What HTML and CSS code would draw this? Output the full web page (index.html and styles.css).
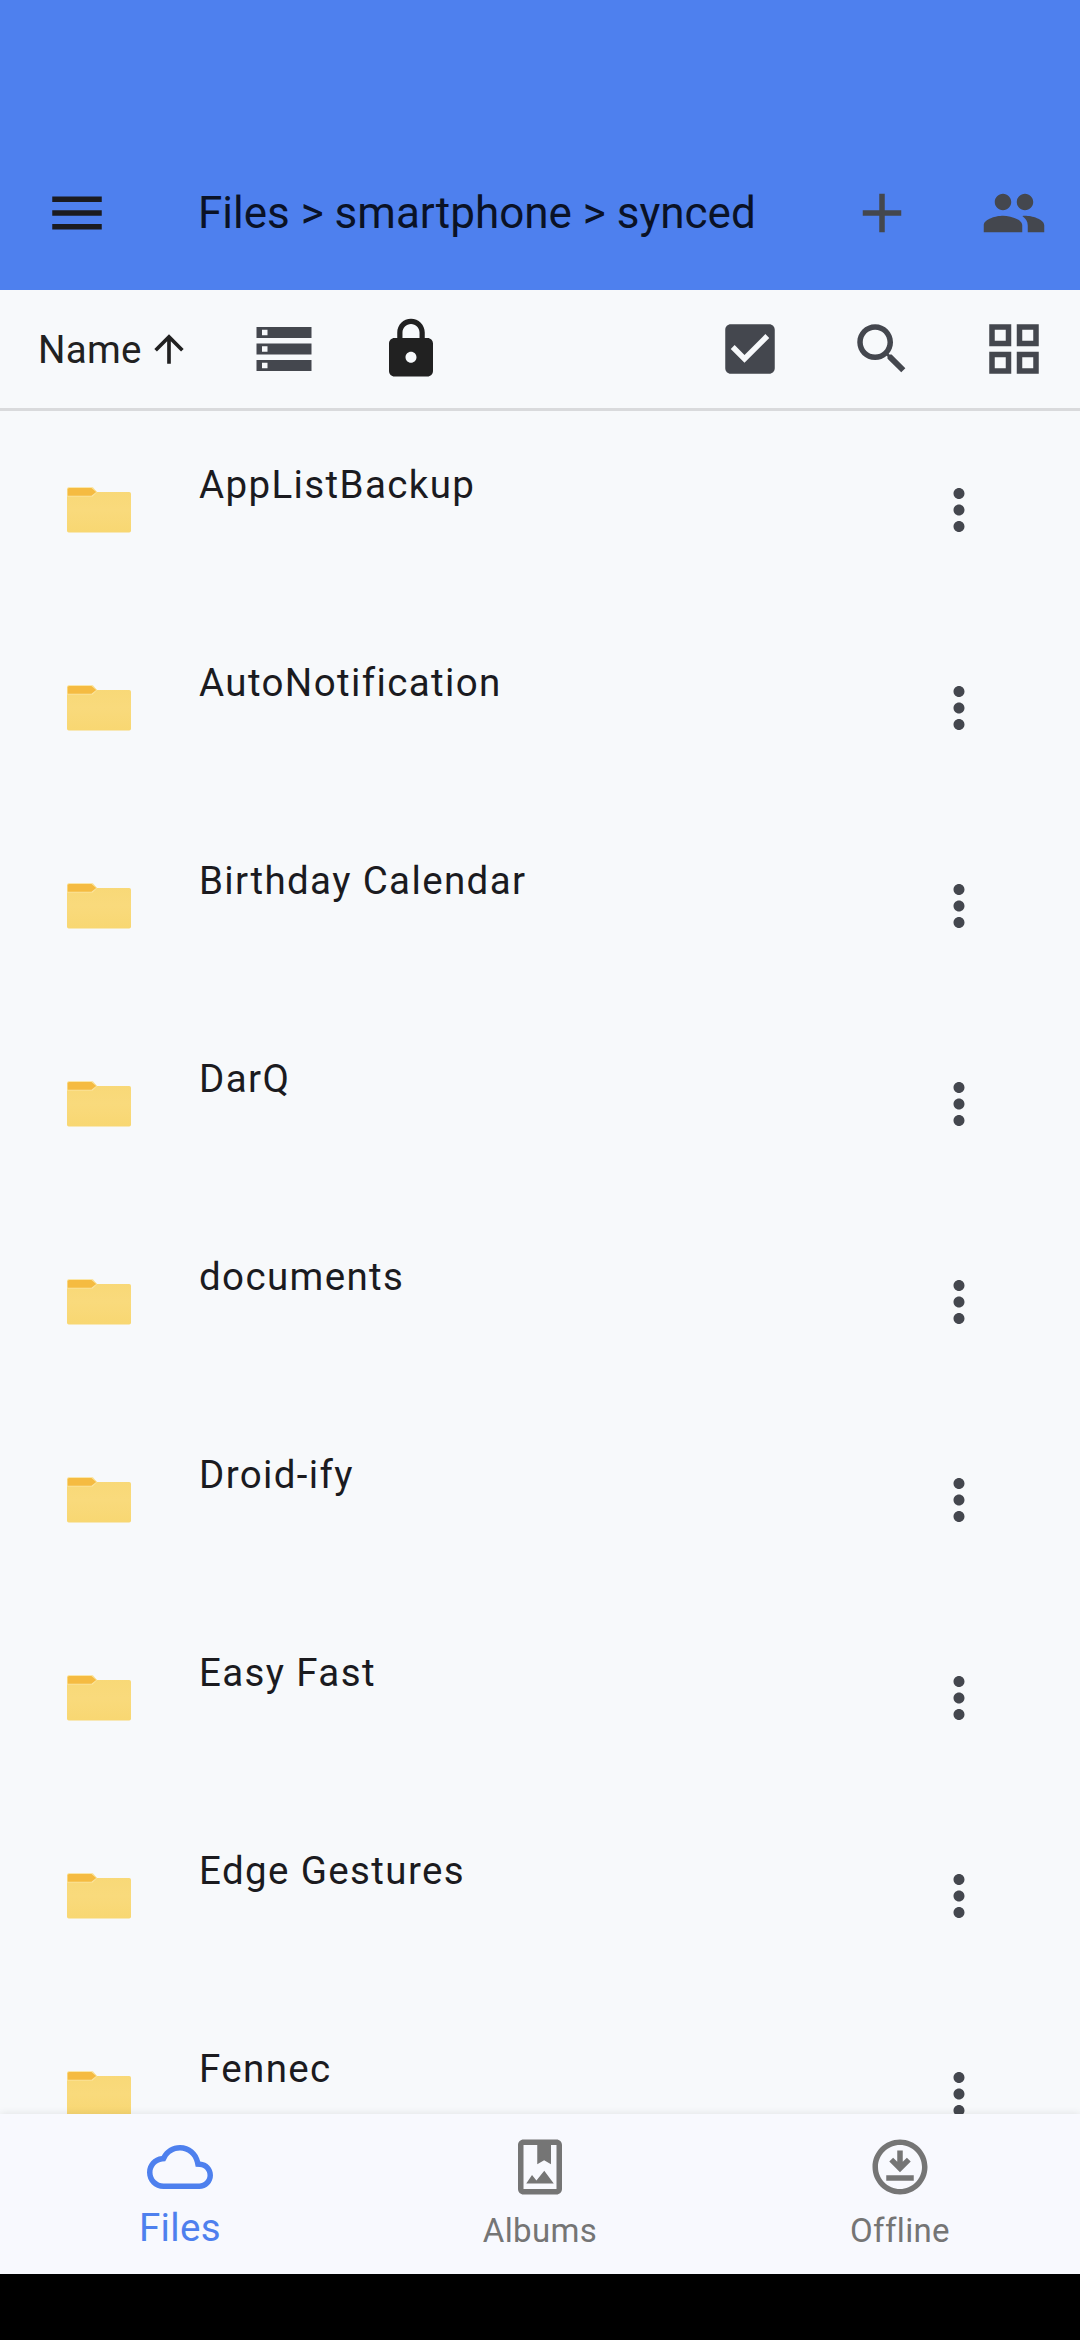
FILE: index.html
```html
<!DOCTYPE html>
<html lang="en">
<head>
<meta charset="utf-8">
<title>Files</title>
<link rel="stylesheet" href="styles.css">
</head>
<body>
<svg class="defs" aria-hidden="true">
  <defs>
    <linearGradient id="paper" x1="0" y1="0" x2="0" y2="1"><stop offset="0" stop-color="#f8d876"/><stop offset=".5" stop-color="#f9da7c"/><stop offset="1" stop-color="#f8d772"/></linearGradient>
  </defs>
  <symbol id="folder" viewBox="0 0 64 46">
    <path fill="url(#paper)" d="M0 2.2Q0 .4 1.8 .4H26L30 5H62.200Q64 5 64 6.800V43.700Q64 45.500 62.200 45.500H1.800Q0 45.500 0 43.700Z"/>
    <path fill="#fbe6a4" d="M0 2.200Q0 .2 2 .2H25.500L30 5L25.500 9.600H0Z"/>
    <path fill="#f5bb41" d="M.6 2.600Q.6 1 2.200 1H24.500L29.200 5L24.500 8.700H.6Z"/>
  </symbol>
  <symbol id="more" viewBox="0 0 24 24"><path d="M12 8c1.100 0 2-.9 2-2s-.9-2-2-2-2 .9-2 2 .9 2 2 2zm0 2c-1.100 0-2 .9-2 2s.9 2 2 2 2-.9 2-2-.9-2-2-2zm0 6c-1.100 0-2 .9-2 2s.9 2 2 2 2-.9 2-2-.9-2-2-2z"/></symbol>
</svg>
<div class="screen">
  <header class="appbar">
    <svg class="icon menu" viewBox="0 0 24 24"><path d="M3 18h18v-2H3v2zm0-5h18v-2H3v2zm0-7v2h18V6H3z"/></svg>
    <h1 class="title">Files &gt; smartphone &gt; synced</h1>
    <svg class="icon" viewBox="0 0 24 24"><path d="M19 13h-6v6h-2v-6H5v-2h6V5h2v6h6v2z"/></svg>
    <svg class="icon" viewBox="0 0 24 24"><path d="M16 11c1.660 0 2.990-1.340 2.990-3S17.660 5 16 5c-1.660 0-3 1.340-3 3s1.340 3 3 3zm-8 0c1.660 0 2.990-1.340 2.990-3S9.660 5 8 5C6.340 5 5 6.340 5 8s1.340 3 3 3zm0 2c-2.330 0-7 1.170-7 3.500V19h14v-2.500c0-2.330-4.670-3.500-7-3.500zm8 0c-.29 0-.62.020-.97.050 1.160.84 1.970 1.970 1.970 3.450V19h6v-2.500c0-2.330-4.670-3.500-7-3.500z"/></svg>
  </header>
  <div class="toolbar">
    <div class="sort"><span>Name</span><svg class="arrow" viewBox="0 0 24 24"><path d="M4 12l1.410 1.410L11 7.830V20h2V7.830l5.580 5.590L20 12l-8-8-8 8z"/></svg></div>
    <svg class="icon storage" viewBox="0 0 24 24"><path d="M2 20h20v-4H2v4zm2-3h2v2H4v-2zM2 4v4h20V4H2zm4 3H4V5h2v2zm-4 7h20v-4H2v4zm2-3h2v2H4v-2z"/></svg>
    <svg class="icon lock" viewBox="0 0 24 24"><path d="M18 8h-1V6c0-2.760-2.240-5-5-5S7 3.240 7 6v2H6c-1.100 0-2 .9-2 2v10c0 1.100.9 2 2 2h12c1.100 0 2-.9 2-2V10c0-1.100-.9-2-2-2zm-6 9c-1.100 0-2-.9-2-2s.9-2 2-2 2 .9 2 2-.9 2-2 2zm3.100-9H8.900V6c0-1.710 1.390-3.100 3.100-3.100 1.710 0 3.100 1.390 3.100 3.100v2z"/></svg>
    <div class="actions">
      <svg class="icon" viewBox="0 0 24 24"><path d="M19 3H5c-1.110 0-2 .9-2 2v14c0 1.100.89 2 2 2h14c1.110 0 2-.9 2-2V5c0-1.100-.89-2-2-2zm-9 14l-5-5 1.410-1.410L10 14.170l7.590-7.590L19 8l-9 9z"/></svg>
      <svg class="icon" viewBox="0 0 24 24"><path d="M15.500 14h-.79l-.28-.27C15.410 12.590 16 11.110 16 9.500 16 5.910 13.090 3 9.500 3S3 5.910 3 9.500 5.910 16 9.500 16c1.610 0 3.090-.59 4.230-1.570l.27.28v.79l5 4.990L20.490 19l-4.990-5zm-6 0C7.010 14 5 11.990 5 9.500S7.010 5 9.500 5 14 7.010 14 9.500 11.990 14 9.500 14z"/></svg>
      <svg class="icon" viewBox="0 0 24 24"><path fill-rule="evenodd" d="M3 3v8h8V3H3zm6 6H5V5h4v4zm-6 4v8h8v-8H3zm6 6H5v-4h4v4zm4-16v8h8V3h-8zm6 6h-4V5h4v4zm-6 4v8h8v-8h-8zm6 6h-4v-4h4v4z"/></svg>
    </div>
  </div>
  <main class="list">
    <div class="row"><svg class="folder"><use href="#folder"/></svg><span class="name">AppListBackup</span><svg class="icon"><use href="#more"/></svg></div>
    <div class="row"><svg class="folder"><use href="#folder"/></svg><span class="name">AutoNotification</span><svg class="icon"><use href="#more"/></svg></div>
    <div class="row"><svg class="folder"><use href="#folder"/></svg><span class="name">Birthday Calendar</span><svg class="icon"><use href="#more"/></svg></div>
    <div class="row"><svg class="folder"><use href="#folder"/></svg><span class="name">DarQ</span><svg class="icon"><use href="#more"/></svg></div>
    <div class="row"><svg class="folder"><use href="#folder"/></svg><span class="name">documents</span><svg class="icon"><use href="#more"/></svg></div>
    <div class="row"><svg class="folder"><use href="#folder"/></svg><span class="name">Droid-ify</span><svg class="icon"><use href="#more"/></svg></div>
    <div class="row"><svg class="folder"><use href="#folder"/></svg><span class="name">Easy Fast</span><svg class="icon"><use href="#more"/></svg></div>
    <div class="row"><svg class="folder"><use href="#folder"/></svg><span class="name">Edge Gestures</span><svg class="icon"><use href="#more"/></svg></div>
    <div class="row"><svg class="folder"><use href="#folder"/></svg><span class="name">Fennec</span><svg class="icon"><use href="#more"/></svg></div>
  </main>
  <nav class="tabs">
    <div class="tab active">
      <svg class="icon" viewBox="0 0 24 24"><path d="M19.350 10.040C18.670 6.590 15.640 4 12 4 9.110 4 6.600 5.640 5.350 8.040 2.340 8.360 0 10.910 0 14c0 3.310 2.690 6 6 6h13c2.760 0 5-2.240 5-5 0-2.640-2.050-4.780-4.650-4.960zM19 18H6c-2.210 0-4-1.790-4-4 0-2.050 1.530-3.760 3.560-3.970l1.070-.11.5-.95C8.080 7.140 9.940 6 12 6c2.620 0 4.880 1.860 5.390 4.430l.3 1.500 1.530.11c1.560.1 2.780 1.410 2.780 2.960 0 1.650-1.350 3-3 3z"/></svg>
      <span>Files</span>
    </div>
    <div class="tab">
      <svg class="icon" viewBox="0 0 24 24"><path d="M18 2H6c-1.100 0-2 .9-2 2v16c0 1.100.9 2 2 2h12c1.100 0 2-.9 2-2V4c0-1.100-.9-2-2-2zm0 18H6V4h5v7l2.500-1.500L16 11V4h2v16z"/><path d="M7 18l2.100-3.100 1.600 2 2.850-3.500L17 18z"/></svg>
      <span>Albums</span>
    </div>
    <div class="tab">
      <svg class="icon" viewBox="0 0 24 24"><path d="M12 2C6.490 2 2 6.490 2 12s4.490 10 10 10 10-4.490 10-10S17.510 2 12 2zm0 18c-4.410 0-8-3.590-8-8s3.590-8 8-8 8 3.590 8 8-3.590 8-8 8z"/><path d="M15.900 10L14.500 8.600 13 10.100V6h-2v4.100L9.500 8.600 8.100 10 12 13.900zM17 15H7v2h10z"/></svg>
      <span>Offline</span>
    </div>
  </nav>
</div>
</body>
</html>
```
FILE: styles.css
```css
* { box-sizing: border-box; }
body { margin: 0; background: #000; font-family: Roboto, sans-serif; }
svg { display: block; flex: none; }
.defs { position: absolute; width: 0; height: 0; }
.screen {
  display: flex;
  flex-direction: column;
  width: 1080px;
  height: 2340px;
  padding-bottom: 66px;
  overflow: hidden;
}
.icon { width: 66px; height: 66px; fill: #44474e; }
.appbar {
  display: flex;
  align-items: center;
  flex: none;
  height: 290px;
  padding: 136px 33px 0 44px;
  background: #4e80ee;
}
.menu { fill: #1b1b1f; }
.title {
  flex: 1;
  margin: 0 0 0 88px;
  font-size: 44px;
  font-weight: 400;
  line-height: 60px;
  white-space: nowrap;
  color: #0a1226;
}
.appbar .icon:last-child { margin-left: 66px; }
.toolbar {
  display: flex;
  align-items: center;
  flex: none;
  height: 121px;
  padding: 0 33px 0 38px;
  background: #f7f9fb;
  border-bottom: 3px solid #d9dadc;
}
.sort {
  display: flex;
  align-items: center;
  width: 213px;
  gap: 5px;
  font-size: 38.5px;
  line-height: 50px;
  letter-spacing: .3px;
  color: #212121;
}
.sort span { padding-top: 2px; }
.arrow { width: 44px; height: 44px; fill: #212121; }
.lock { margin-left: 61px; fill: #212121; }
.actions { display: flex; gap: 66px; margin-left: auto; }
.list { flex: 1; min-height: 0; overflow: hidden; background: #f7f9fb; }
.row {
  display: flex;
  align-items: center;
  height: 198px;
  padding: 0 88px 0 67px;
}
.folder { width: 64px; height: 46px; }
.name {
  flex: 1;
  align-self: flex-start;
  margin: 49px 0 0 68px;
  font-size: 38.5px;
  line-height: 50px;
  letter-spacing: 1.375px;
  color: #1b1b1f;
}
.tabs {
  position: relative;
  display: flex;
  flex: none;
  height: 160px;
  background: #f8f9fe;
  box-shadow: 0 0 8px rgba(0, 0, 0, .1);
}
.tab {
  display: flex;
  flex: 1;
  flex-direction: column;
  align-items: center;
  padding-top: 20px;
  font-size: 33px;
  line-height: 40px;
  letter-spacing: .35px;
  color: #757575;
}
.tab .icon { fill: currentColor; }
.tab span { margin-top: 11px; }
.tab.active { font-size: 38.5px; color: #4e80ee; }
.tab.active span { margin-top: 8px; }
```
